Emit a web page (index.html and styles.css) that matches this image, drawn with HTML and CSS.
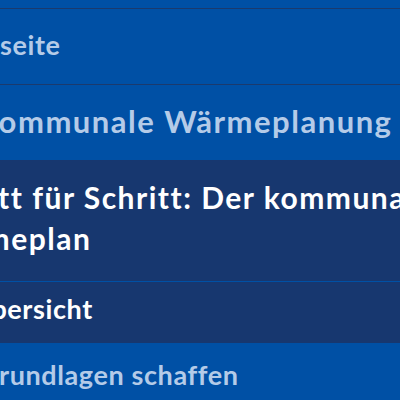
FILE: index.html
```html
<!DOCTYPE html>
<html lang="de">
<head>
<meta charset="utf-8">
<link rel="stylesheet" href="styles.css">
</head>
<body>
<nav class="nav">
  <ul class="menu">
    <li class="item item-top"><a class="link link-sub link-home" href="#">Startseite</a></li>
    <li class="item item-top"><a class="link link-main link-kwp" href="#">Kommunale Wärmeplanung</a></li>
    <li class="item item-dark item-title"><a class="link link-title" href="#">Schritt für Schritt: Der kommunale Wärmeplan</a></li>
    <li class="item item-dark item-sub"><a class="link link-sub link-overview" href="#">Übersicht</a></li>
    <li class="item item-last"><a class="link link-sub link-basics" href="#">Grundlagen schaffen</a></li>
  </ul>
</nav>
</body>
</html>
```
FILE: styles.css
```css
html, body {
  margin: 0;
  padding: 0;
}
body {
  width: 400px;
  height: 400px;
  overflow: hidden;
  background: #0050a5;
  font-family: Lato, "Noto Sans", sans-serif;
  font-weight: 700;
}
.nav {
  padding-top: 8px;
}
.menu {
  list-style: none;
  margin: 0;
  padding: 0;
  width: 400px;
}
.item {
  border-top: 1px solid #1b3a6d;
}
.item-top {
  padding: 20px 0 23px;
}
.item-dark {
  background: #17376f;
  border-top: none;
}
.item-title {
  padding: 17px 0 22px;
}
.item-sub {
  border-top: 1px solid #0050a5;
  padding: 11px 0 18px;
}
.item-last {
  border-top: none;
  padding: 16px 0 20px;
}
.link {
  display: block;
  color: #b4cbe8;
  text-decoration: none;
  line-height: 32px;
  white-space: nowrap;
}
.item-dark .link {
  color: #ffffff;
}
.link-main {
  font-size: 31px;
  letter-spacing: 1.5px;
}
.link-home {
  margin-left: -61px;
}
.link-kwp {
  margin-left: -23px;
}
.link-title {
  font-size: 30px;
  letter-spacing: 1.5px;
  line-height: 41px;
  margin-left: -76px;
  width: 520px;
  white-space: normal;
}
.link-sub {
  font-size: 27px;
  letter-spacing: 0.6px;
}
.link-overview {
  margin-left: -29px;
}
.link-basics {
  margin-left: -21px;
}
```
